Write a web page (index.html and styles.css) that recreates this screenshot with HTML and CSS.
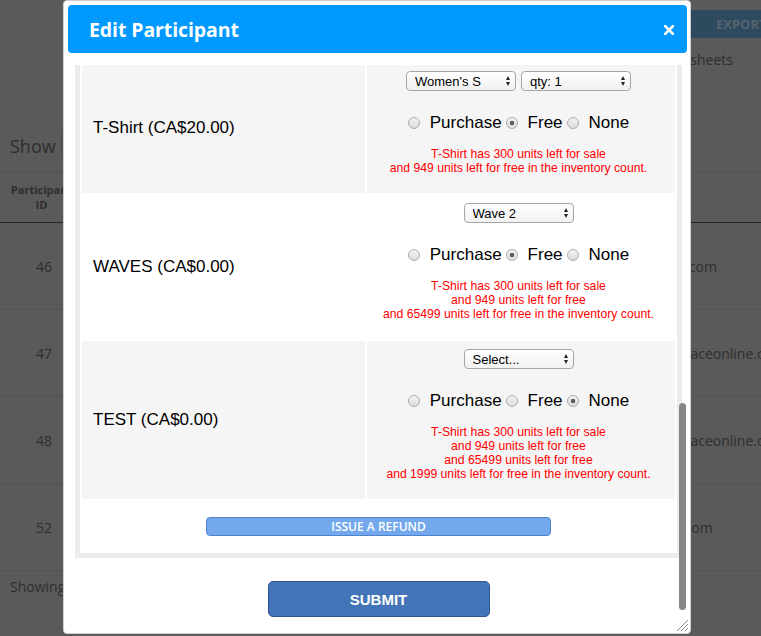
FILE: index.html
```html
<!DOCTYPE html>
<html lang="en">

<head>
  <meta charset="UTF-8">
  <meta name="viewport" content="width=device-width, initial-scale=1.0">
  <title>Participants - Edit Participant</title>
  <link rel="stylesheet" href="styles.css">
</head>

<body>
  <div id="page">
    <div class="toolbar">
      <button class="export-button">EXPORT</button>
    </div>
    <p class="help-text">Export the participant list to spreadsheets</p>

    <div class="length-row">
      <span>Show</span>
      <span class="length-select"></span>
    </div>

    <table class="participants">
      <thead>
        <tr>
          <th class="id-col">Participant<br>ID</th>
          <th class="name-col"></th>
          <th class="email-col"></th>
        </tr>
      </thead>
      <tbody>
        <tr>
          <td class="id-col">46</td>
          <td class="name-col"></td>
          <td class="email-col">a@ya.com</td>
        </tr>
        <tr>
          <td class="id-col">47</td>
          <td class="name-col"></td>
          <td class="email-col">kay@raceonline.ca</td>
        </tr>
        <tr>
          <td class="id-col">48</td>
          <td class="name-col"></td>
          <td class="email-col">kay@raceonline.ca</td>
        </tr>
        <tr>
          <td class="id-col">52</td>
          <td class="name-col"></td>
          <td class="email-col">j@ya.com</td>
        </tr>
      </tbody>
    </table>

    <div class="table-info">Showing 1 to 4 of 4 entries</div>
  </div>

  <div class="dialog">
    <div class="dialog-header">
      <span class="dialog-title">Edit Participant</span>
      <button class="dialog-close" aria-label="Close">
        <svg width="10" height="10" viewBox="0 0 10 10">
          <path d="M1 1 L9 9 M9 1 L1 9" stroke="#fff" stroke-width="2.6" stroke-linecap="square" />
        </svg>
      </button>
    </div>

    <div class="dialog-body">
      <div class="product-box">
        <table class="products">
          <tr>
            <td class="product-name">T-Shirt (CA$20.00)</td>
            <td class="product-options">
              <div class="option-selects">
                <span class="select-wrap"><select><option>Women's S</option></select></span>
                <span class="select-wrap"><select><option>qty: 1</option></select></span>
              </div>
              <div class="option-radios">
                <input type="radio" name="tshirt" id="tshirt-purchase"><label for="tshirt-purchase">Purchase</label>
                <input type="radio" name="tshirt" id="tshirt-free" checked><label for="tshirt-free">Free</label>
                <input type="radio" name="tshirt" id="tshirt-none"><label for="tshirt-none">None</label>
              </div>
              <p class="stock-note">T-Shirt has 300 units left for sale<br>and 949 units left for free in the inventory count.</p>
            </td>
          </tr>
          <tr>
            <td class="product-name">WAVES (CA$0.00)</td>
            <td class="product-options">
              <div class="option-selects">
                <span class="select-wrap"><select><option>Wave 2</option></select></span>
              </div>
              <div class="option-radios">
                <input type="radio" name="waves" id="waves-purchase"><label for="waves-purchase">Purchase</label>
                <input type="radio" name="waves" id="waves-free" checked><label for="waves-free">Free</label>
                <input type="radio" name="waves" id="waves-none"><label for="waves-none">None</label>
              </div>
              <p class="stock-note">T-Shirt has 300 units left for sale<br>and 949 units left for free<br>and 65499 units left for free in the inventory count.</p>
            </td>
          </tr>
          <tr>
            <td class="product-name">TEST (CA$0.00)</td>
            <td class="product-options">
              <div class="option-selects">
                <span class="select-wrap"><select><option>Select...</option></select></span>
              </div>
              <div class="option-radios">
                <input type="radio" name="test" id="test-purchase"><label for="test-purchase">Purchase</label>
                <input type="radio" name="test" id="test-free"><label for="test-free">Free</label>
                <input type="radio" name="test" id="test-none" checked><label for="test-none">None</label>
              </div>
              <p class="stock-note">T-Shirt has 300 units left for sale<br>and 949 units left for free<br>and 65499 units left for free<br>and 1999 units left for free in the inventory count.</p>
            </td>
          </tr>
          <tr>
            <td class="refund-cell" colspan="2">
              <button class="refund-button">ISSUE A REFUND</button>
            </td>
          </tr>
        </table>
      </div>

      <div class="submit-row">
        <button class="submit-button">SUBMIT</button>
      </div>
    </div>

    <div class="scroll-thumb"></div>
    <svg class="resize-grip" width="12" height="13" viewBox="0 0 12 13">
      <path d="M12 2 L1 13 M12 6 L5 13 M12 10 L9 13" stroke="#8c8c8c" stroke-width="1" />
    </svg>
  </div>
</body>

</html>
```

FILE: styles.css
```css
body {
  margin: 0;
  font-family: 'Open Sans', sans-serif;
  background-color: #5a5a5a;
}

/* page behind the dialog, already dimmed */
#page {
  position: relative;
  width: 761px;
  height: 636px;
  overflow: hidden;
  color: #2e2e2e;
}

.toolbar {
  display: flex;
  justify-content: flex-end;
  margin-top: 10px;
  height: 28px;
}

.export-button {
  width: 71px;
  height: 28px;
  padding: 0 0 0 26px;
  border: none;
  background-color: #2e4a5f;
  color: #55636e;
  font-family: 'Open Sans', sans-serif;
  font-weight: bold;
  font-size: 13px;
  text-align: left;
  white-space: nowrap;
  overflow: hidden;
}

.help-text {
  margin: 12px 0 0;
  padding-right: 28px;
  font-size: 14px;
  line-height: 20px;
  text-align: right;
}

.length-row {
  display: flex;
  align-items: center;
  gap: 5px;
  height: 25px;
  margin-top: 63px;
  padding-left: 10px;
  font-size: 18px;
}

.length-select {
  display: inline-block;
  width: 60px;
  height: 23px;
  border: 1px solid #4a4a4a;
  border-radius: 4px;
}

.participants {
  width: 900px;
  margin-top: 13px;
  border-collapse: collapse;
  border-top: 1px solid #525252;
}

.participants th {
  height: 50px;
  padding: 0;
  font-size: 11px;
  line-height: 15px;
  border-bottom: 1px solid #262626;
  text-align: left;
}

.participants td {
  height: 86px;
  padding: 0;
  font-size: 14px;
  border-bottom: 1px solid #525252;
}

.participants .id-col {
  width: 83px;
}

.participants th.id-col {
  text-align: center;
}

.participants td.id-col {
  text-align: right;
  padding-right: 31px;
  box-sizing: border-box;
}

.participants .name-col {
  width: 567px;
}

.table-info {
  margin-top: 6px;
  padding-left: 10px;
  font-size: 14px;
  line-height: 20px;
}

/* dialog */
.dialog {
  position: absolute;
  left: 63px;
  top: 0;
  width: 628px;
  height: 634px;
  box-sizing: border-box;
  padding: 4px 3px 4px 4px;
  background-color: #fff;
  border: 1px solid #cfcfcf;
  border-radius: 4px;
}

.dialog-header {
  display: flex;
  align-items: center;
  justify-content: space-between;
  height: 48px;
  padding: 0 13px 0 21px;
  background-color: #0099ff;
  border-radius: 4px;
}

.dialog-title {
  color: #fff;
  font-family: 'Open Sans', sans-serif;
  font-weight: bold;
  font-size: 19.5px;
  letter-spacing: -0.1px;
}

.dialog-close {
  display: flex;
  padding: 0;
  margin-top: 2px;
  border: none;
  background: none;
}

.dialog-body {
  height: 564px;
  margin-top: 12px;
  padding: 0 5px 0 7px;
  overflow: hidden;
}

.product-box {
  margin-top: -9px;
  border: 5px solid #ececec;
}

.products {
  width: 100%;
  border-collapse: separate;
  border-spacing: 2px;
  font-family: 'Liberation Sans', Arial, sans-serif;
}

.products tr:nth-child(odd) td {
  background-color: #f5f5f5;
}

.products td {
  padding: 0;
}

.product-name {
  width: 283px;
  padding-left: 11px !important;
  font-size: 17px;
  color: #000;
  vertical-align: middle;
  box-sizing: border-box;
}

.product-options {
  padding: 8px 5px 18px 0 !important;
  text-align: center;
  vertical-align: top;
}

.option-selects {
  display: flex;
  justify-content: center;
  gap: 5px;
  height: 20px;
}

.select-wrap {
  position: relative;
  display: inline-block;
}

.select-wrap::before,
.select-wrap::after {
  content: '';
  position: absolute;
  right: 6px;
  border-left: 2.5px solid transparent;
  border-right: 2.5px solid transparent;
  pointer-events: none;
}

.select-wrap::before {
  top: 5px;
  border-bottom: 4px solid #222;
}

.select-wrap::after {
  top: 11px;
  border-top: 4px solid #222;
}

.select-wrap select {
  -webkit-appearance: none;
  appearance: none;
  width: 110px;
  height: 20px;
  margin: 0;
  padding: 0 0 0 8px;
  border: 1px solid #a6a6a6;
  border-radius: 4px;
  background: linear-gradient(#ffffff, #f1f1f1);
  font-family: 'Liberation Sans', Arial, sans-serif;
  font-size: 13px;
  color: #000;
}

.option-radios {
  display: flex;
  justify-content: center;
  align-items: center;
  height: 20px;
  margin-top: 22px;
  font-size: 17px;
  line-height: 20px;
  color: #000;
}

.option-radios input {
  -webkit-appearance: none;
  appearance: none;
  width: 12px;
  height: 12px;
  margin: 0 10px 0 0;
  border: 1px solid #adadad;
  border-radius: 50%;
  background: linear-gradient(#f3f3f3, #dcdcdc);
}

.option-radios input:checked {
  background: radial-gradient(circle, #5e5e5e 0 2px, transparent 2.6px), linear-gradient(#f3f3f3, #dcdcdc);
}

.option-radios label {
  margin-right: 4px;
}

.option-radios label:last-child {
  margin-right: 0;
}

.stock-note {
  margin: 14px 0 0;
  font-size: 12.2px;
  line-height: 14px;
  color: #ff0000;
}

.refund-cell {
  height: 50px;
  text-align: center;
  vertical-align: middle;
}

.refund-button {
  width: 345px;
  height: 19px;
  padding: 0;
  border: 1px solid #4d84cb;
  border-radius: 4px;
  background-color: #73a9ec;
  color: #fff;
  font-family: 'Open Sans', sans-serif;
  font-weight: 600;
  font-size: 12px;
  line-height: 17px;
}

.submit-row {
  display: flex;
  justify-content: center;
  margin-top: 23px;
}

.submit-button {
  width: 222px;
  height: 36px;
  padding: 0;
  border: 1px solid #2c5590;
  border-radius: 5px;
  background-color: #4374b7;
  color: #fff;
  font-family: 'Liberation Sans', Arial, sans-serif;
  font-weight: bold;
  font-size: 15px;
}

.scroll-thumb {
  position: absolute;
  left: 615px;
  top: 402px;
  width: 7px;
  height: 207px;
  border-radius: 4px;
  background-color: #868686;
}

.resize-grip {
  position: absolute;
  left: 612px;
  top: 617px;
}
```
